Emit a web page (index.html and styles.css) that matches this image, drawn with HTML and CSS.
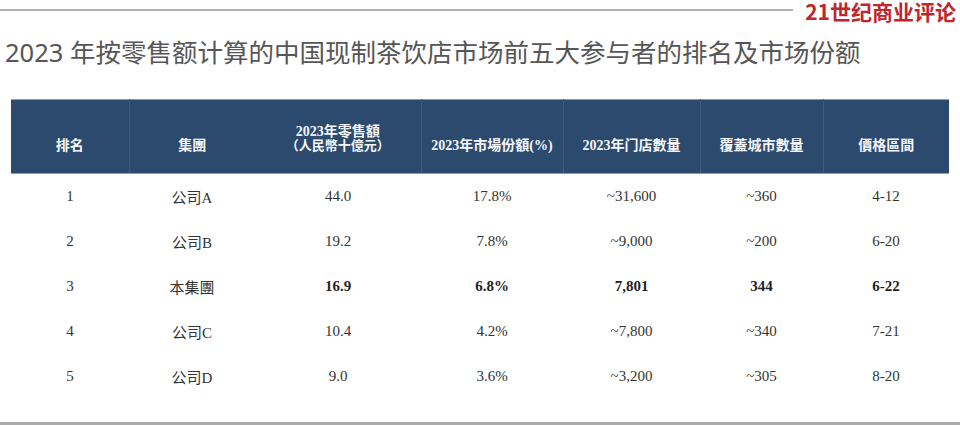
FILE: index.html
```html
<!DOCTYPE html>
<html lang="zh">
<head>
<meta charset="utf-8">
<title>2023 年现制茶饮店市场排名</title>
<link rel="stylesheet" href="styles.css">
</head>
<body>
<div class="page">
  <header class="brand">
    <div class="rule"></div>
    <div class="logo">21世纪商业评论</div>
  </header>
  <h1 class="title">2023 年按零售额计算的中国现制茶饮店市场前五大参与者的排名及市场份额</h1>
  <table class="rank">
    <colgroup>
      <col class="c1"><col class="c2"><col class="c3"><col class="c4"><col class="c5"><col class="c6"><col class="c7">
    </colgroup>
    <thead>
      <tr>
        <th class="sep">排名</th>
        <th>集團</th>
        <th class="sep"><span class="l1">2023年零售額</span><span class="l2">（人民幣十億元）</span></th>
        <th class="sep">2023年市場份額(%)</th>
        <th class="sep">2023年门店數量</th>
        <th class="sep">覆蓋城市數量</th>
        <th>價格區間</th>
      </tr>
    </thead>
    <tbody>
      <tr><td>1</td><td>公司A</td><td>44.0</td><td>17.8%</td><td>~31,600</td><td>~360</td><td>4-12</td></tr>
      <tr><td>2</td><td>公司B</td><td>19.2</td><td>7.8%</td><td>~9,000</td><td>~200</td><td>6-20</td></tr>
      <tr class="own"><td>3</td><td>本集團</td><td class="b">16.9</td><td class="b">6.8%</td><td class="b">7,801</td><td class="b">344</td><td class="b">6-22</td></tr>
      <tr><td>4</td><td>公司C</td><td>10.4</td><td>4.2%</td><td>~7,800</td><td>~340</td><td>7-21</td></tr>
      <tr><td>5</td><td>公司D</td><td>9.0</td><td>3.6%</td><td>~3,200</td><td>~305</td><td>8-20</td></tr>
    </tbody>
  </table>
  <div class="foot"></div>
</div>
</body>
</html>
```

FILE: styles.css
```css
html, body {
  margin: 0;
  padding: 0;
  background: #ffffff;
}

.page {
  width: 960px;
  height: 425px;
  overflow: hidden;
  display: flex;
  flex-direction: column;
}

.brand {
  display: flex;
  align-items: flex-start;
  gap: 12px;
  height: 24px;
}

.rule {
  flex: 1;
  height: 2px;
  margin-top: 9px;
  background: #b3b3b3;
}

.logo {
  margin-right: 4px;
  font-family: "Noto Sans CJK SC", "Noto Sans", sans-serif;
  font-weight: 700;
  font-size: 21px;
  line-height: 22px;
  color: #c0262d;
  white-space: nowrap;
}

.title {
  margin: 14px 0 0 5px;
  font-family: "Noto Sans", "Noto Sans CJK SC", sans-serif;
  font-weight: 400;
  font-size: 25.5px;
  line-height: 30px;
  color: #565656;
  white-space: nowrap;
}

.rank {
  margin: 32px 0 0 11px;
  width: 938px;
  border-collapse: collapse;
  table-layout: fixed;
}

.c1 { width: 118px; }
.c2 { width: 126px; }
.c3 { width: 166px; }
.c4 { width: 142px; }
.c5 { width: 137px; }
.c6 { width: 123px; }
.c7 { width: 126px; }

.rank thead th {
  height: 74px;
  box-sizing: border-box;
  padding: 0 0 20px 0;
  vertical-align: bottom;
  background: #2c4a6d;
  color: #f4f6f9;
  font-family: "Liberation Serif", "Noto Sans CJK TC", serif;
  font-weight: 700;
  font-size: 14px;
  line-height: 15px;
  text-align: center;
  white-space: nowrap;
  border-top: 1px solid #8e9bab;
  border-bottom: 1px solid #8e9bab;
}

.rank thead th .l1,
.rank thead th .l2 {
  display: block;
}

.rank thead th .l2 {
  font-size: 13px;
  line-height: 14px;
}

.rank thead th.sep {
  border-right: 1px solid #3f5a7c;
}

.rank tbody td {
  height: 45px;
  padding: 0;
  text-align: center;
  vertical-align: middle;
  font-family: "Liberation Serif", "Noto Sans CJK SC", serif;
  font-size: 15px;
  color: #333333;
}

.rank tbody td.b {
  font-weight: 700;
  color: #1f1f1f;
}

.foot {
  margin-top: 23px;
  height: 3px;
  background: #ababab;
}
```
